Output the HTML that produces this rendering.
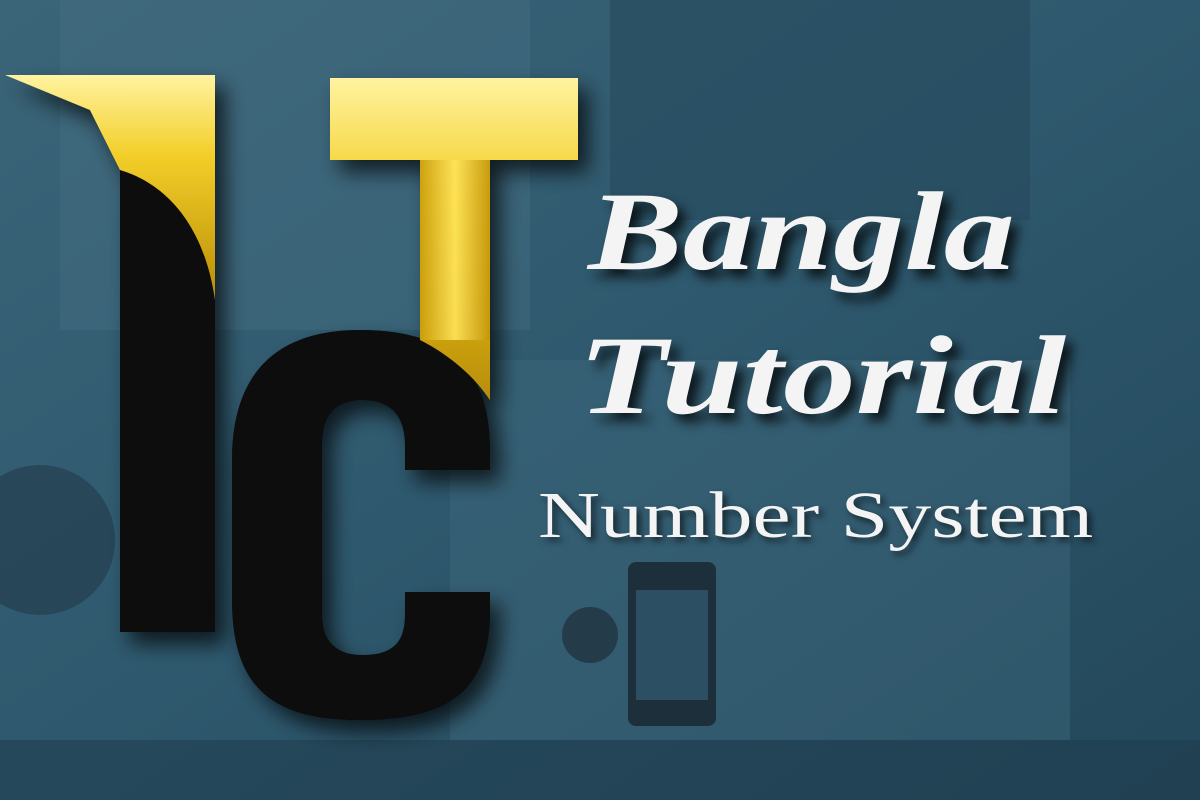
<!DOCTYPE html>
<html><head><meta charset="utf-8"><style>
html,body{margin:0;padding:0;width:1200px;height:800px;overflow:hidden}
body{background:#2d566b;position:relative;font-family:"Liberation Serif",serif}
.bg{position:absolute;inset:0}
.t{position:absolute;color:#f4f4f4;white-space:nowrap;text-shadow:6px 8px 10px rgba(0,0,0,.75);transform-origin:0 0}
</style></head><body>
<svg class="bg" width="1200" height="800" viewBox="0 0 1200 800">
<defs>
<linearGradient id="bgg" x1="0" y1="0" x2="1" y2="1">
<stop offset="0" stop-color="#3a6478"/><stop offset="0.5" stop-color="#2e586d"/><stop offset="1" stop-color="#23475a"/></linearGradient>
<linearGradient id="gold" x1="0" y1="0" x2="0" y2="1">
<stop offset="0" stop-color="#fff3a0"/><stop offset="0.35" stop-color="#f3cf2a"/><stop offset="1" stop-color="#b98d06"/></linearGradient>
<linearGradient id="goldv" x1="0" y1="0" x2="1" y2="0">
<stop offset="0" stop-color="#c99c0a"/><stop offset="0.5" stop-color="#ffe45a"/><stop offset="1" stop-color="#c49508"/></linearGradient>
<filter id="sh" x="-20%" y="-20%" width="140%" height="140%"><feDropShadow dx="10" dy="12" stdDeviation="10" flood-color="#000" flood-opacity=".7"/></filter>
</defs>
<rect width="1200" height="800" fill="url(#bgg)"/>
<rect x="60" y="0" width="470" height="330" fill="#4a7387" opacity=".35"/>
<rect x="450" y="360" width="620" height="380" fill="#3d687c" opacity=".45"/>
<rect x="628" y="562" width="88" height="164" rx="8" fill="#1c2f3a"/>
<rect x="636" y="590" width="72" height="110" fill="#2c4f63"/>
<rect x="610" y="0" width="420" height="220" fill="#274a5d" opacity=".6"/>
<circle cx="40" cy="540" r="75" fill="#243f4f" opacity=".7"/>
<circle cx="590" cy="635" r="28" fill="#243c4a"/>
<rect x="0" y="740" width="1200" height="60" fill="#1f3e4f" opacity=".6"/>
<g filter="url(#sh)">
<rect x="120" y="170" width="95" height="462" fill="#080808"/>
<path d="M5 75 L215 75 L215 300 C205 230 170 185 120 170 L90 110 Z" fill="url(#gold)"/>
<path d="M360 330 C270 330 232 380 232 460 L232 600 C232 690 275 720 360 720 C450 720 490 690 490 610 L490 592 L405 592 L405 615 C405 645 390 655 362 655 C335 655 322 640 322 615 L322 445 C322 415 335 400 362 400 C390 400 405 415 405 445 L405 470 L490 470 L490 450 C490 370 450 330 360 330 Z" fill="#080808"/>
<path d="M330 78 L578 78 L578 160 L490 160 L490 400 C470 370 440 350 420 340 L420 160 L330 160 Z" fill="url(#gold)"/>
<rect x="420" y="160" width="70" height="180" fill="url(#goldv)" opacity=".9"/>
</g>
</svg>
<div class="t" style="left:588px;top:168px;font-size:112px;font-weight:bold;font-style:italic;transform:scaleX(1.27)">Bangla</div>
<div class="t" style="left:578px;top:312px;font-size:112px;font-weight:bold;font-style:italic;transform:scaleX(1.30)">Tutorial</div>
<div class="t" style="left:538px;top:478px;font-size:66px;transform:scaleX(1.3);text-shadow:3px 4px 6px rgba(0,0,0,.6)">Number System</div>
</body></html>
